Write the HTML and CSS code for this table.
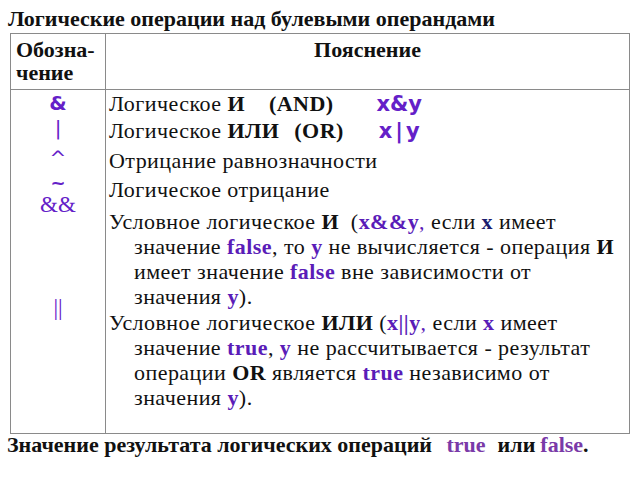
FILE: index.html
```html
<!DOCTYPE html>
<html lang="ru">
<head>
<meta charset="utf-8">
<link rel="stylesheet" href="styles.css">
</head>
<body>
<h1 class="title">Логические операции над булевыми операндами</h1>
<table class="ops">
  <tr class="head">
    <th class="c1">Обозна-<br>чение</th>
    <th class="c2">Пояснение</th>
  </tr>
  <tr class="body">
    <td class="c1">
      <div class="sym s-amp">&amp;</div>
      <div class="sym s-bar">|</div>
      <div class="sym s-xor">^</div>
      <div class="sym s-not">~</div>
      <div class="sym s-and2">&amp;&amp;</div>
      <div class="sym s-or2">||</div>
    </td>
    <td class="c2">
      <p class="p p1">Логическое <b>И</b><span class="sp1">(AND)</span><span class="code c-and">x&amp;y</span></p>
      <p class="p p2">Логическое <b>ИЛИ</b><span class="sp2">(OR)</span><span class="code c-or">x<span class="pipe">|</span>y</span></p>
      <p class="p p3">Отрицание равнозначности</p>
      <p class="p p4">Логическое отрицание</p>
      <p class="p p5">Условное логическое <b>И</b>&nbsp; (<b class="pu">x&amp;&amp;y</b><span class="pu">,</span> если <b class="navy">x</b> имеет<br>значение <b class="pu">false</b>, то <b class="pu">y</b> не вычисляется - операция <b>И</b><br>имеет значение <b class="pu">false</b> вне зависимости от<br>значения <b class="pu">y</b>).</p>
      <p class="p p6">Условное логическое <b>ИЛИ</b> (<b class="pu">x||y</b><span class="pu">,</span> если <b class="pu">x</b> имеет<br>значение <b class="pu">true</b>, <b class="pu">y</b> не рассчитывается - результат<br>операции <b>OR</b> является <b class="pu">true</b> независимо от<br>значения <b class="pu">y</b>).</p>
    </td>
  </tr>
</table>
<p class="foot">Значение результата логических операций <span class="lt">true</span><span class="or">или</span><span class="lf">false</span>.</p>
</body>
</html>
```
FILE: styles.css
```css
html, body {
  margin: 0;
  padding: 0;
  background: #fff;
}
body {
  font-family: "Liberation Serif", "Times New Roman", serif;
  color: #111;
  width: 640px;
  height: 480px;
  overflow: hidden;
}
.title {
  margin: 0;
  padding: 7px 0 0 8px;
  font-size: 22px;
  line-height: 24px;
  font-weight: bold;
  height: 26px;
}
.ops {
  margin-left: 10px;
  width: 620px;
  border-collapse: collapse;
  border: 1px solid #8a8a8a;
}
.ops th, .ops td {
  border: 1px solid #8a8a8a;
  vertical-align: top;
  padding: 0;
}
.ops .c1 {
  width: 94px;
}
.head th {
  font-size: 22px;
  line-height: 23px;
  font-weight: bold;
  height: 56px;
  box-sizing: border-box;
}
.head .c1 {
  text-align: left;
  padding: 4px 0 0 5px;
}
.head .c2 {
  text-align: center;
  padding: 4px 0 0 0;
}
.body td {
  font-size: 22px;
  line-height: 25px;
}
.body .c2 {
  padding: 1px 0 23px 3px;
  letter-spacing: 0.45px;
}
.body .c1 {
  text-align: center;
  padding-top: 1px;
  color: #6420c8;
}
.sym {
  height: 25px;
}
.s-amp {
  font-family: "DejaVu Sans", sans-serif;
  font-weight: bold;
  font-size: 20px;
}
.s-bar {
  font-family: "DejaVu Sans", sans-serif;
  font-size: 20px;
  height: 30px;
}
.s-xor {
  font-family: "DejaVu Sans", sans-serif;
  font-size: 20px;
  height: 24px;
}
.s-not {
  font-family: "DejaVu Sans", sans-serif;
  font-weight: bold;
  font-size: 18px;
  height: 22px;
}
.s-and2 {
  font-size: 23px;
}
.s-or2 {
  margin-top: 78px;
  font-size: 23px;
}
.p {
  margin: 0;
  padding-left: 25px;
  text-indent: -25px;
}
.p2 { margin-top: 1px; }
.p3 { margin-top: 4px; }
.p4 { margin-top: 4px; }
.p5 { margin-top: 7px; }
.p6 { margin-top: 1px; }
.sp1 { margin-left: 24px; font-weight: bold; }
.sp2 { margin-left: 15px; font-weight: bold; }
.code {
  font-family: "DejaVu Sans", sans-serif;
  font-weight: bold;
  font-size: 21px;
  letter-spacing: 0;
  color: #6420c8;
}
.c-and { margin-left: 43px; }
.c-or { margin-left: 35px; }
.pipe { margin: 0 3px; }
.pu { color: #5a1cb8; }
.navy { color: #1c1c6e; }
.foot {
  margin: 0;
  padding: 0 0 0 7px;
  font-size: 22px;
  line-height: 22px;
  font-weight: bold;
}
.lt, .lf { color: #7a3aa8; }
.lt { margin-left: 9px; }
.or { margin-left: 12px; margin-right: 5px; }
```
